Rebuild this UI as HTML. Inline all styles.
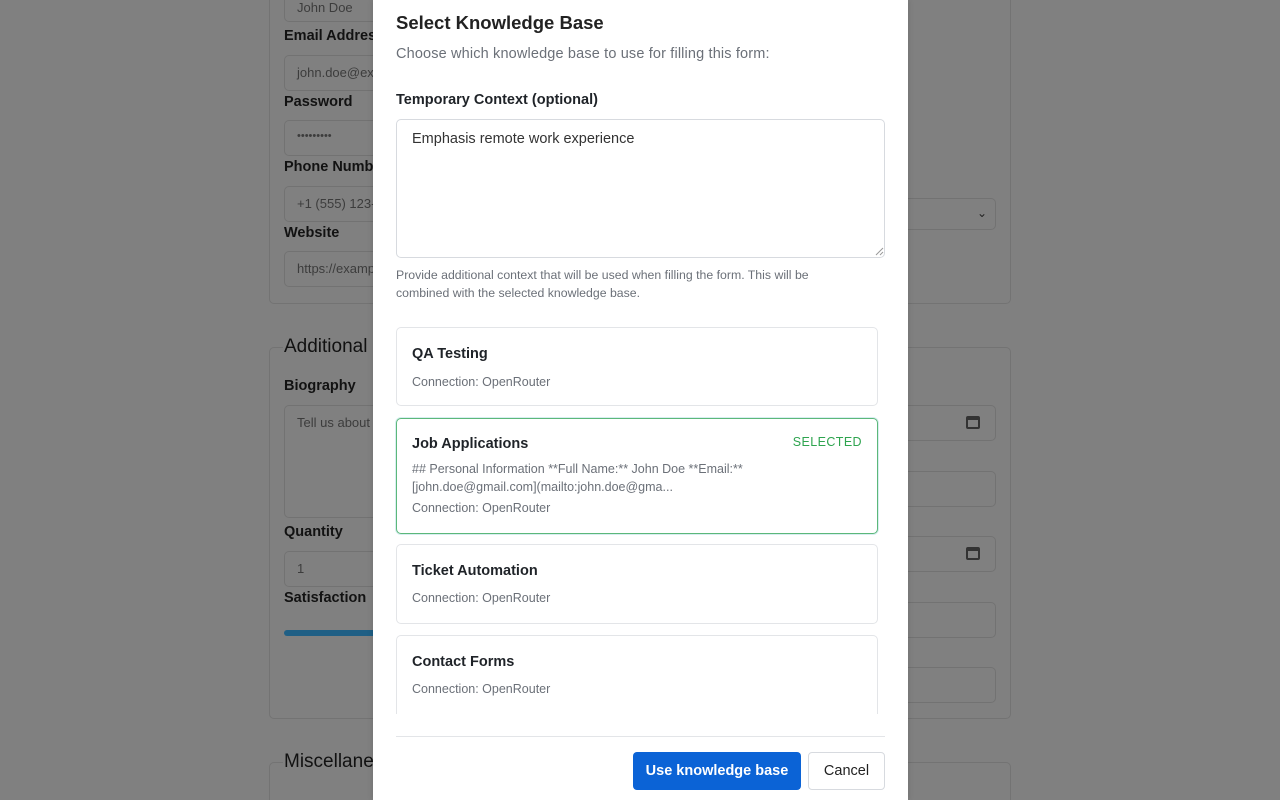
<!DOCTYPE html>
<html><head><meta charset="utf-8"><style>
*{box-sizing:border-box;margin:0;padding:0}
html,body{width:1280px;height:800px;overflow:hidden}
body{background:#808080;font-family:"Liberation Sans",Arial,sans-serif;position:relative}
.a{position:absolute}
.fs{position:absolute;border:1px solid #737373;border-radius:5px;left:269px;width:742px}
.lg{position:absolute;font-size:19px;color:#111;background:#808080;padding:0 1px}
.lb{position:absolute;left:284px;font-size:14.5px;font-weight:bold;color:#121212}
.in{position:absolute;border:1px solid #727272;border-radius:5px;height:36px;font-size:13px;color:#3c3c3c;padding:9px 12px}
.modal{position:absolute;left:373px;top:0;width:535px;height:800px;background:#fff;box-shadow:0 0 6px rgba(0,0,0,.15)}
.m{position:absolute}
.card{position:absolute;left:23px;width:482px;border:1px solid #e3e5e8;border-radius:5px;background:#fff}
.ct{position:absolute;left:15px;font-size:14.5px;font-weight:bold;color:#1f2328}
.cc{position:absolute;left:15px;font-size:12.5px;color:#6b7078}
</style></head><body>
<div class="fs" style="top:-20px;height:324px"></div>
<div class="in" style="left:284px;top:-14px;width:400px;padding-top:13px">John Doe</div>
<div class="lb" style="top:28px">Email Address</div>
<div class="in" style="left:284px;top:55px;width:400px">john.doe@example.com</div>
<div class="lb" style="top:94px">Password</div>
<div class="in" style="left:284px;top:120px;width:400px;font-size:11px">•••••••••</div>
<div class="lb" style="top:159px">Phone Number</div>
<div class="in" style="left:284px;top:186px;width:400px">+1 (555) 123-4567</div>
<div class="in" style="left:800px;top:198px;width:196px;height:32px;text-align:right;padding:7px 8px;font-size:12px;color:#222">⌄</div>
<div class="lb" style="top:225px">Website</div>
<div class="in" style="left:284px;top:251px;width:400px">https://example.com</div>

<div class="fs" style="top:347px;height:372px"></div>
<div class="lg" style="left:283px;top:336px">Additional Information</div>
<div class="lb" style="top:378px">Biography</div>
<div class="in" style="left:284px;top:405px;width:400px;height:113px">Tell us about yourself</div>
<div class="in" style="left:800px;top:405px;width:196px"></div>
<div class="in" style="left:800px;top:471px;width:196px"></div>
<div class="in" style="left:800px;top:536px;width:196px"></div>
<div class="in" style="left:800px;top:602px;width:196px"></div>
<div class="in" style="left:800px;top:667px;width:196px"></div>
<div class="a" style="left:966px;top:416px;width:14px;height:13px;border:2px solid #333;border-top-width:4px;border-radius:2px"></div>
<div class="a" style="left:966px;top:547px;width:14px;height:13px;border:2px solid #333;border-top-width:4px;border-radius:2px"></div>
<div class="lb" style="top:524px">Quantity</div>
<div class="in" style="left:284px;top:551px;width:400px">1</div>
<div class="lb" style="top:590px">Satisfaction</div>
<div class="a" style="left:284px;top:630px;width:300px;height:6px;border-radius:3px;background:#1f5f85"></div>

<div class="fs" style="top:762px;height:60px"></div>
<div class="lg" style="left:283px;top:751px">Miscellaneous</div>

<div class="modal">
<div class="m" style="left:23px;top:12px;font-size:18.5px;font-weight:bold;color:#222">Select Knowledge Base</div>
<div class="m" style="left:23px;top:46px;font-size:14.5px;color:#6b7078;letter-spacing:.15px">Choose which knowledge base to use for filling this form:</div>
<div class="m" style="left:23px;top:92px;font-size:14.5px;font-weight:bold;color:#1f2328">Temporary Context (optional)</div>
<div class="m" style="left:23px;top:119px;width:489px;height:139px;border:1px solid #d7dadf;border-radius:5px;padding:11px 15px;font-size:14.5px;color:#333">Emphasis remote work experience</div>
<svg class="m" style="left:502px;top:247px" width="9" height="9"><path d="M8 1L1 8M8 5L5 8" stroke="#999" stroke-width="1"/></svg>
<div class="m" style="left:23px;top:266px;width:450px;font-size:12.3px;line-height:18px;color:#6b7078">Provide additional context that will be used when filling the form. This will be combined with the selected knowledge base.</div>

<div class="card" style="top:327px;height:79px"><div class="ct" style="top:18px">QA Testing</div><div class="cc" style="top:47px">Connection: OpenRouter</div></div>
<div class="card" style="top:418px;height:116px;border:1px solid #5cb87a;box-shadow:0 0 0 1px #d8eef0"><div class="ct" style="top:17px">Job Applications</div>
<div class="m" style="right:15px;top:16px;font-size:12.5px;color:#2ea44f;letter-spacing:.4px">SELECTED</div>
<div class="cc" style="top:41px;line-height:18px;width:380px">## Personal Information **Full Name:** John Doe **Email:** [john.doe@gmail.com](mailto:john.doe@gma...</div>
<div class="cc" style="top:82px">Connection: OpenRouter</div></div>
<div class="card" style="top:544px;height:80px"><div class="ct" style="top:18px">Ticket Automation</div><div class="cc" style="top:46px">Connection: OpenRouter</div></div>
<div class="m" style="left:23px;top:635px;width:482px;height:79px;overflow:hidden"><div class="card" style="left:0;top:0;height:100px"><div class="ct" style="top:18px">Contact Forms</div><div class="cc" style="top:46px">Connection: OpenRouter</div></div></div>

<div class="m" style="left:23px;top:736px;width:489px;height:1px;background:#e3e5e8"></div>
<div class="m" style="left:260px;top:752px;width:168px;height:38px;background:#0b63d6;border-radius:4px;color:#fff;font-size:14.5px;font-weight:bold;text-align:center;line-height:38px">Use knowledge base</div>
<div class="m" style="left:435px;top:752px;width:77px;height:38px;border:1px solid #d7dadf;border-radius:4px;color:#222;font-size:14.5px;text-align:center;line-height:36px">Cancel</div>
</div>
</body></html>
